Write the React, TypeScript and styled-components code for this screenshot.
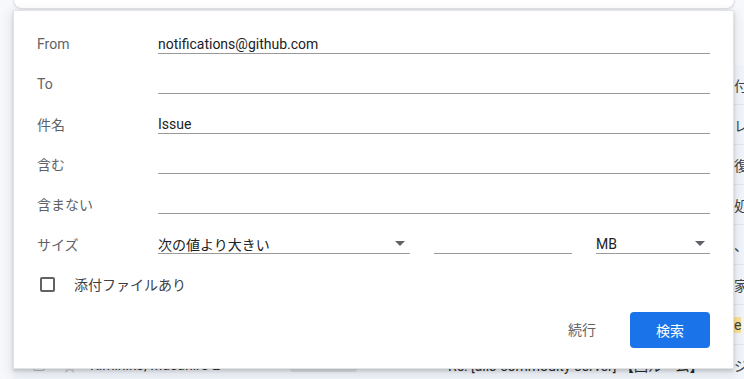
import styled, { createGlobalStyle } from 'styled-components'

const GlobalStyle = createGlobalStyle`
    html, body {
        margin: 0;
        padding: 0;
        background: #f6f8fc;
        overflow: hidden;
    }
    * {
        box-sizing: border-box;
    }
`

const font = `Roboto, "Noto Sans CJK JP", "Liberation Sans", sans-serif`

const PageMainContent = styled.div`
    position: relative;
    width: 744px;
    height: 379px;
    overflow: hidden;
    background: #f6f8fc;
    font-family: ${font};
`

const SearchBar = styled.div`
    height: 9px;
    margin: 0 9px 0 13px;
    background: #fff;
    border: 1px solid #dfe1e5;
    border-top: none;
    border-radius: 0 0 13px 13px;
    box-shadow: 0 1px 2px rgba(60, 64, 67, .12);
`

const ListToolbar = styled.div`
    height: 56px;
`

const MailList = styled.div`
    margin-left: 13px;
    background: #f2f6fc;
`

const MailRow = styled.div`
    display: grid;
    grid-template-columns: 29px 28px 200px 158px 286px 1fr;
    align-items: center;
    height: 40px;
    padding-left: 20px;
    border-bottom: 1px solid #e3e6ea;
    font-size: 14px;
    color: #202124;
    white-space: nowrap;
    overflow: hidden;
`

const RowCheck = styled.span`
    width: 12px;
    height: 12px;
    border: 1.5px solid #b6b9bd;
    border-radius: 2px;
`

const RowStar = styled.span`
    color: #b6b9bd;
    font-size: 15px;
`

const RowSender = styled.span`
    overflow: hidden;
`

const RowChip = styled.span`
    justify-self: start;
    padding: 0 6px;
    background: #dde1e6;
    border-radius: 3px;
    color: #6b7075;
    font-size: 12px;
`

const RowSubject = styled.span`
    overflow: hidden;
`

const RowSnippet = styled.span<{ $mark?: boolean }>`
    overflow: hidden;
    color: #5f6368;
    span {
        background: ${p => (p.$mark ? '#fde293' : 'transparent')};
        color: #3c4043;
    }
`

const SearchDialog = styled.div`
    position: absolute;
    top: 10px;
    left: 13px;
    width: 721px;
    height: 359px;
    padding: 13px 23px 0 23px;
    background: #fff;
    border: 1px solid #e3e3e3;
    box-shadow: 0 2px 3px rgba(60, 64, 67, .2), 0 4px 10px 2px rgba(60, 64, 67, .12);
`

const FieldRow = styled.div`
    display: grid;
    grid-template-columns: 121px 1fr;
    align-items: center;
    height: 40px;
`

const FieldLabel = styled.div`
    font-size: 14px;
    color: #5f6368;
`

const LineInput = styled.input`
    width: 100%;
    height: 19px;
    padding: 0;
    border: none;
    border-bottom: 1px solid #9a9a9a;
    outline: none;
    background: transparent;
    font-family: ${font};
    font-size: 14px;
    color: #202124;
`

const SizeFields = styled.div`
    display: grid;
    grid-template-columns: 252px 138px 114px;
    gap: 24px;
`

const LineSelect = styled.div`
    display: flex;
    align-items: center;
    justify-content: space-between;
    height: 19px;
    padding-right: 5px;
    border-bottom: 1px solid #9a9a9a;
    font-size: 14px;
    color: #202124;
`

const CheckRow = styled.label`
    display: flex;
    align-items: center;
    gap: 19px;
    height: 40px;
    padding-left: 3px;
    font-size: 14px;
    color: #3c4043;
`

const CheckBox = styled.span`
    width: 15px;
    height: 15px;
    border: 2px solid #5f6368;
    border-radius: 2px;
`

const ButtonRow = styled.div`
    display: flex;
    justify-content: flex-end;
    align-items: center;
    gap: 10px;
    margin-top: 8px;
`

const TextButton = styled.div`
    padding: 0 24px;
    line-height: 36px;
    font-size: 14px;
    color: #5f6368;
`

const PrimaryButton = styled.div`
    width: 80px;
    height: 36px;
    display: flex;
    align-items: center;
    justify-content: center;
    background: #1a73e8;
    border-radius: 4px;
    font-size: 14px;
    color: #fff;
`

const Caret = () => (
    <svg width="10" height="5" viewBox="0 0 10 5">
        <path d="M0 0h10L5 5z" fill="#5f6368" />
    </svg>
)

const mails = [
    { sender: 'GitHub', chip: 'inbox', subject: '[alis] Pull request', snippet: '付' },
    { sender: 'Takahiro', chip: 'inbox', subject: 'Re: レビュー', snippet: 'レ' },
    { sender: 'notifications', chip: 'inbox', subject: '[alis] 修正', snippet: '復' },
    { sender: 'GitHub', chip: 'inbox', subject: '[alis] 対応', snippet: '処' },
    { sender: 'Kimihiko', chip: 'inbox', subject: '[alis] Issue', snippet: '、‘' },
    { sender: 'GitHub', chip: 'inbox', subject: '[alis] 確認', snippet: '家' },
    { sender: 'Masahiro', chip: 'inbox', subject: 'Issue', snippet: 'e', mark: true },
    { sender: 'Kimihiko, Masahiro 2', chip: 'alis-server', subject: 'Re: [alis-commodity-server] 【回ルーム】', snippet: 'ジ' },
]

const fields = [
    { label: 'From', value: 'notifications@github.com' },
    { label: 'To', value: '' },
    { label: '件名', value: 'Issue' },
    { label: '含む', value: '' },
    { label: '含まない', value: '' },
]

const App = () => {
    return (
        <PageMainContent>
            <GlobalStyle />
            <SearchBar />
            <ListToolbar />

            <MailList>
                {mails.map((m, i) => (
                    <MailRow key={i}>
                        <RowCheck />
                        <RowStar>☆</RowStar>
                        <RowSender>{m.sender}</RowSender>
                        <RowChip>{m.chip}</RowChip>
                        <RowSubject>{m.subject}</RowSubject>
                        <RowSnippet $mark={m.mark}>
                            <span>{m.snippet}</span>
                        </RowSnippet>
                    </MailRow>
                ))}
            </MailList>

            <SearchDialog>
                {fields.map(f => (
                    <FieldRow key={f.label}>
                        <FieldLabel>{f.label}</FieldLabel>
                        <LineInput defaultValue={f.value} readOnly />
                    </FieldRow>
                ))}

                <FieldRow>
                    <FieldLabel>サイズ</FieldLabel>
                    <SizeFields>
                        <LineSelect>
                            次の値より大きい
                            <Caret />
                        </LineSelect>
                        <LineInput defaultValue="" readOnly />
                        <LineSelect>
                            MB
                            <Caret />
                        </LineSelect>
                    </SizeFields>
                </FieldRow>

                <CheckRow>
                    <CheckBox />
                    添付ファイルあり
                </CheckRow>

                <ButtonRow>
                    <TextButton>続行</TextButton>
                    <PrimaryButton>検索</PrimaryButton>
                </ButtonRow>
            </SearchDialog>
        </PageMainContent>
    )
}

export default App
